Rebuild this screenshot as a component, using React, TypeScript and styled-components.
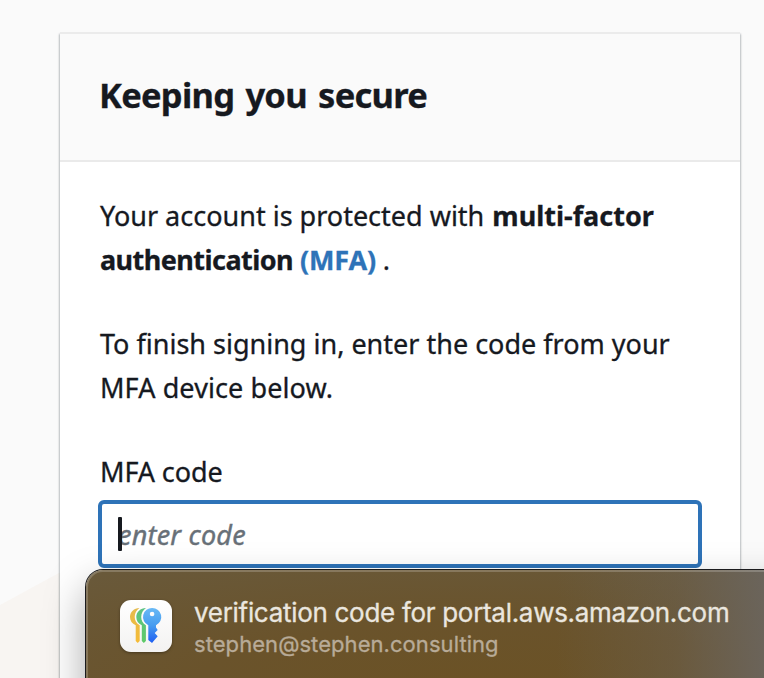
import React from "react";
import styled, { createGlobalStyle } from "styled-components";

const GlobalStyle = createGlobalStyle`
  * { box-sizing: border-box; }
  body { margin: 0; background: #fafafa; overflow: hidden; }
`;

const Page = styled.div`
  position: relative;
  height: 678px;
  overflow: hidden;
  padding: 32px 24px 0 60px;
  background: #fafafa;
  color: #16191f;
  font-family: "Noto Sans", "Open Sans", sans-serif;
`;

const Backdrop = styled.div`
  position: absolute;
  left: 0;
  bottom: 0;
  width: 160px;
  height: 160px;
  background: #f8f5f2;
  clip-path: polygon(0 87px, 100% 0, 100% 100%, 0 100%);
`;

const Card = styled.main`
  position: relative;
  width: 680px;
  height: 720px;
  background: #fff;
  border-top: 2px solid #ebebeb;
  box-shadow: 0 2px 2px rgba(0, 28, 36, 0.3), 1px 2px 2px rgba(0, 28, 36, 0.15),
    -1px 2px 2px rgba(0, 28, 36, 0.15);
`;

const CardHeader = styled.header`
  display: flex;
  align-items: center;
  height: 128px;
  padding: 0 40px 5px 39px;
  background: #fafafa;
  border-bottom: 2px solid #eaeaea;
`;

const Title = styled.h1`
  margin: 0;
  font-size: 34.5px;
  line-height: 44px;
  font-weight: 700;
  letter-spacing: -0.75px;
  word-spacing: 3px;
  -webkit-text-stroke: 0.3px currentColor;
`;

const CardBody = styled.div`
  padding: 32px 38px 0 40px;
`;

const Paragraph = styled.p`
  margin: 0 0 40px;
  font-size: 27px;
  line-height: 44px;
  white-space: nowrap;
  -webkit-text-stroke: 0.3px currentColor;
`;

const Strong = styled.b<{ $tracking?: number; $inset?: number }>`
  margin-left: ${(p) => p.$inset ?? 0}px;
  letter-spacing: ${(p) => p.$tracking ?? 0}px;
`;

const Tracked = styled.span`
  letter-spacing: 0.1px;
`;

const MfaLink = styled.a`
  color: #2e73b8;
  font-weight: 700;
  letter-spacing: -0.2px;
  text-decoration: none;
`;

const Label = styled.label`
  display: block;
  font-size: 27px;
  line-height: 44px;
  letter-spacing: -0.1px;
  -webkit-text-stroke: 0.3px currentColor;
`;

const Field = styled.div`
  display: flex;
  align-items: center;
  height: 68px;
  margin: 6px 0 0 -2px;
  padding: 0 16px;
  border: 4px solid #2e73b8;
  border-radius: 6px;
  background: #fff;
`;

const Caret = styled.span`
  z-index: 1;
  width: 4px;
  height: 34px;
  margin-right: -4px;
  border-radius: 1px;
  background: #16191f;
`;

const Placeholder = styled.span`
  padding-top: 2px;
  color: #687078;
  font-size: 27px;
  line-height: 44px;
  font-style: italic;
  letter-spacing: 0.2px;
  -webkit-text-stroke: 0.4px currentColor;
`;

const Popup = styled.aside`
  position: absolute;
  left: 86px;
  top: 570px;
  width: 760px;
  height: 200px;
  display: flex;
  align-items: flex-start;
  gap: 22px;
  padding: 30px 34px;
  border-radius: 17px;
  font-family: Inter, "Liberation Sans", sans-serif;
  background:
    linear-gradient(90deg, transparent 470px, rgba(107, 102, 96, 0.35) 590px, rgba(107, 102, 96, 0.95) 690px),
    radial-gradient(ellipse 620px 140px at 390px 115px, #6b5225 0%, #6a532b 45%, #69593a 100%);
  box-shadow: inset 0 0 0 2px rgba(255, 255, 255, 0.2), 0 0 0 1px #1b1b1d,
    0 18px 42px rgba(0, 0, 0, 0.36);
`;

const AppIcon = styled.svg`
  flex: none;
  width: 52px;
  height: 52px;
  border-radius: 11px;
  background: linear-gradient(#fff, #f3f2f1);
  box-shadow: 0 1px 3px rgba(0, 0, 0, 0.35);
`;

const Entry = styled.div`
  display: flex;
  flex-direction: column;
  white-space: nowrap;
`;

const EntryTitle = styled.span`
  margin-top: -3px;
  color: #eae6df;
  font-size: 26px;
  line-height: 32px;
  letter-spacing: -0.3px;
  -webkit-text-stroke: 0.3px currentColor;
`;

const EntryAccount = styled.span`
  margin-top: 1px;
  color: #b8ab98;
  font-size: 22px;
  line-height: 28px;
  letter-spacing: 0.06px;
  -webkit-text-stroke: 0.3px currentColor;
`;

const KeysIcon = () => (
  <AppIcon viewBox="0 0 52 52">
    <defs>
      <linearGradient id="blueKey" x1="0" y1="0" x2="0" y2="1">
        <stop offset="0" stopColor="#69b9f5" />
        <stop offset="0.5" stopColor="#459cf0" />
        <stop offset="1" stopColor="#1f5ff2" />
      </linearGradient>
      <linearGradient id="greenKey" x1="0" y1="0" x2="0" y2="1">
        <stop offset="0" stopColor="#5cc283" />
        <stop offset="1" stopColor="#5fca68" />
      </linearGradient>
      <linearGradient id="yellowKey" x1="0" y1="0" x2="0" y2="1">
        <stop offset="0" stopColor="#e4bb4e" />
        <stop offset="1" stopColor="#f6bb35" />
      </linearGradient>
    </defs>
    <path
      fill="url(#yellowKey)"
      d="M19.500 8C14 8 10 12 10 17c0 3.600 2 6.700 5.700 8.300V41l2 2 2-2V25.300C16.500 23.500 14.700 20.500 14.700 17c0-3.700 1.900-7 4.800-9Z"
    />
    <path
      fill="url(#greenKey)"
      d="M26 8c-5.600 0-9.700 4-9.700 9 0 3.600 2 6.700 5.500 8.300V41l2 2 2.100-2V25.300C22.800 23.500 21.200 20.500 21.200 17c0-3.700 1.900-7 4.800-9Z"
    />
    <path
      fill="url(#blueKey)"
      fillRule="evenodd"
      d="M32.300 8a9 9 0 0 1 3.700 17.200v2.300l1.700 2.500-3 3 3 3.200-5.700 6.800-3.700-2.900V25.200A9 9 0 0 1 32.300 8Zm-.2 3.700a2.300 2.300 0 1 0 0 4.600 2.300 2.300 0 0 0 0-4.600Z"
    />
  </AppIcon>
);

export default function App() {
  return (
    <>
      <GlobalStyle />
      <Page>
        <Backdrop />
        <Card>
          <CardHeader>
            <Title>Keeping you secure</Title>
          </CardHeader>
          <CardBody>
            <Paragraph>
              Your account is protected with <Strong $inset={1}>multi-factor</Strong>
              <br />
              <Strong $tracking={-0.55}>authentication</Strong> <MfaLink>(MFA)</MfaLink> .
            </Paragraph>
            <Paragraph>
              To finish signing in, enter the code from your
              <br />
              <Tracked>MFA device below.</Tracked>
            </Paragraph>
            <Label>MFA code</Label>
            <Field>
              <Caret />
              <Placeholder>enter code</Placeholder>
            </Field>
          </CardBody>
        </Card>
        <Popup>
          <KeysIcon />
          <Entry>
            <EntryTitle>verification code for portal.aws.amazon.com</EntryTitle>
            <EntryAccount>stephen@stephen.consulting</EntryAccount>
          </Entry>
        </Popup>
      </Page>
    </>
  );
}
